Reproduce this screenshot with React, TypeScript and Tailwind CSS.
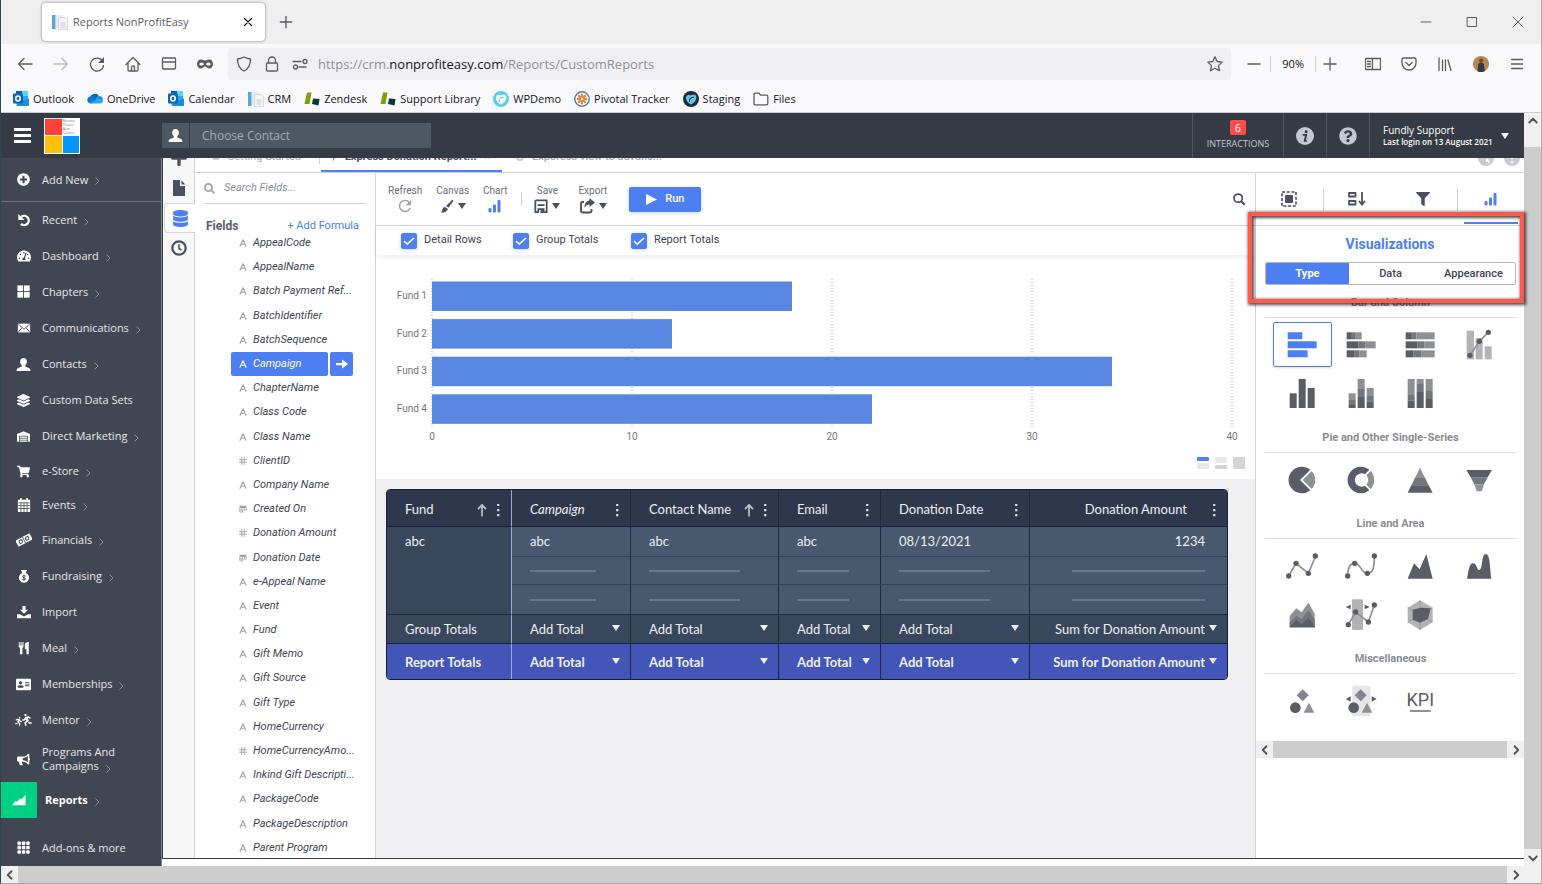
import { useState } from "react";
import type { ReactNode } from "react";
import {
  FaPlusCircle,
  FaTachometerAlt,
  FaLayerGroup,
  FaWarehouse,
  FaShoppingCart,
  FaAddressCard,
  FaBullhorn,
  FaFilter,
  FaDatabase,
  FaQuestionCircle,
  FaSearch,
  FaPlus,
  FaRunning,
} from "react-icons/fa";
import { IoMdRefresh } from "react-icons/io";

const DARK = "#5a5c66";
const MID = "#74767e";
const LIGHT = "#8e9093";
const PALE = "#b3b3b5";

/* ---------- small shared icons ---------- */

function Svg({ box = 16, className = "size-4", children }: { box?: number; className?: string; children: ReactNode }) {
  return (
    <svg viewBox={`0 0 ${box} ${box}`} className={`shrink-0 ${className}`} fill="none" stroke="none" aria-hidden="true">
      {children}
    </svg>
  );
}

function Line({ className = "size-4", d, width = 1.3 }: { className?: string; d: string; width?: number }) {
  return (
    <Svg className={className}>
      <path d={d} stroke="currentColor" strokeWidth={width} strokeLinecap="round" strokeLinejoin="round" />
    </Svg>
  );
}

function Caret({ className = "w-2" }: { className?: string }) {
  return (
    <svg viewBox="0 0 8 6" className={`shrink-0 ${className}`} fill="currentColor" aria-hidden="true">
      <path d="M0 0h8L4 6z" />
    </svg>
  );
}

function Person({ className = "size-4" }: { className?: string }) {
  return (
    <Svg className={className}>
      <path
        fill="currentColor"
        d="M8 1c2.200 0 3.600 1.600 3.600 3.900 0 1.800-.7 3.200-1.700 4v1.200c2.400 1 5 1.700 5.300 3.300.1.500.1 1 .1 1.600H.7c0-.6 0-1.100.1-1.600C1.100 11.800 3.700 11.100 6.100 10.100V8.900c-1-.8-1.700-2.200-1.700-4C4.400 2.600 5.800 1 8 1z"
      />
    </Svg>
  );
}

function SignalBars() {
  return (
    <Svg className="size-4">
      <g fill="currentColor">
        <rect x="1.500" y="10" width="3" height="4.500" rx="1" />
        <rect x="6" y="6.500" width="3" height="8" rx="1" />
        <rect x="10.500" y="2" width="3" height="12.500" rx="1" />
      </g>
    </Svg>
  );
}

function OutlookIcon() {
  return (
    <Svg>
      <rect x="3" y="0" width="12" height="13" rx="1" fill="#28a8ea" />
      <rect x="9" y="0" width="6" height="5" fill="#50d9ff" />
      <rect x="3" y="0" width="6" height="5" fill="#0a5fb4" />
      <path d="M16 7.500V14a1 1 0 0 1-1 1H4l-1-1 6-4z" fill="#1490df" />
      <rect x="0" y="2.500" width="10" height="10" rx="1" fill="#0f63b8" />
      <ellipse cx="5" cy="7.500" rx="2.200" ry="2.500" stroke="#fff" strokeWidth="1.500" />
    </Svg>
  );
}

function OneDriveIcon() {
  return (
    <Svg>
      <path d="M3 7a5 5 0 0 1 9-2l-6 5-4 1z" fill="#0364b8" />
      <path d="M3.600 12.500A3.600 3.600 0 0 1 3.200 5.400c1.500-.6 3-.2 4 .6l6 4z" fill="#0f78d4" />
      <path d="M8.500 7.500A4 4 0 0 1 12.500 5c2.200.3 3.500 2 3.500 4z" fill="#1490df" />
      <path d="M2.500 12.400 11 7.600l4.800 1.200c.6 1.900-.6 3.700-2.800 3.700H3.600z" fill="#28a8ea" />
    </Svg>
  );
}

function DocsIcon() {
  return (
    <Svg>
      <rect x="0" y="1" width="3.500" height="14" fill="#5aa7d6" />
      <path d="M4 1h7v13H4z" fill="#e6ecf1" />
      <path d="M6.500 3.500h6.500l2.500 2.500v9.500h-9z" fill="#f4f6f8" stroke="#c6ced5" strokeWidth=".7" />
      <path d="M8.500 9h5M8.500 11h5M8.500 13h5" stroke="#b9c2ca" strokeWidth=".8" />
    </Svg>
  );
}

function ZendeskIcon() {
  return (
    <Svg>
      <path d="M3 1.500h4.500L5.500 13H.5z" fill="#78a300" />
      <path d="m9 7.500 6.500.5-1 6.500-6.500-1.500z" fill="#03363d" />
    </Svg>
  );
}

function WaveRing({ ring, core }: { ring: string; core: string }) {
  return (
    <Svg>
      <circle cx="8" cy="8" r="8" fill={ring} />
      <path d="M3 6C4 2.500 8 4.500 8 4.500s4-2 5.200 1C14 9 10.500 12.500 8 13.500 5.500 12.500 2.500 9.500 3 6z" fill={core} />
      <path d="M6.500 10.500C6 8 8 6.300 10.500 6.300" stroke={ring} strokeWidth="1.100" strokeLinecap="round" />
    </Svg>
  );
}

function PivotalIcon() {
  return (
    <Svg>
      <circle cx="8" cy="8" r="7.200" fill="#fff" stroke="#4d80a8" strokeWidth="1.400" />
      <path d="M8 2.800v10.400M2.800 8h10.400M4.300 4.300l7.400 7.400M11.700 4.300l-7.400 7.400" stroke="#ee7b30" strokeWidth="2" />
      <circle cx="8" cy="8" r="1.200" fill="#fff" />
    </Svg>
  );
}

/* ---------- browser chrome ---------- */

const bookmarks: { label: string; icon: ReactNode }[] = [
  { label: "Outlook", icon: <OutlookIcon /> },
  { label: "OneDrive", icon: <OneDriveIcon /> },
  { label: "Calendar", icon: <OutlookIcon /> },
  { label: "CRM", icon: <DocsIcon /> },
  { label: "Zendesk", icon: <ZendeskIcon /> },
  { label: "Support Library", icon: <ZendeskIcon /> },
  { label: "WPDemo", icon: <WaveRing ring="#59cdee" core="#fff" /> },
  { label: "Pivotal Tracker", icon: <PivotalIcon /> },
  { label: "Staging", icon: <WaveRing ring="#25283d" core="#59cdee" /> },
  { label: "Files", icon: <Line className="size-4 text-[#5b5b66]" d="M1 12.500v-9c0-.8.5-1.300 1.300-1.300H6l1.500 2h6c.8 0 1.300.5 1.300 1.300v7c0 .8-.5 1.300-1.300 1.300H2.300c-.8 0-1.300-.5-1.300-1.300z" /> },
];

function BrowserChrome() {
  return (
    <header className="shrink-0 font-['Open_Sans',sans-serif]">
      <div className="flex h-11 items-center bg-[#efefef] pl-[41px]">
        <div className="flex h-[38px] w-[223px] items-center rounded bg-white px-2.5 shadow-[0_0_3px_rgba(0,0,0,0.5)]">
          <DocsIcon />
          <span className="ml-[5px] flex-1 text-[11px] text-[#5b5b66]">Reports NonProfitEasy</span>
          <button aria-label="Close tab"><Line className="size-3.5 text-[#15141a]" d="M4 4l8 8M12 4l-8 8" /></button>
        </div>
        <button aria-label="New tab" className="ml-3"><Line className="size-[18px] text-[#5b5b66]" d="M8 3v10M3 8h10" width={1.2} /></button>
        <div className="ml-auto flex gap-[30px] pr-[15px] text-[#5b5b66]">
          <button aria-label="Minimize"><Line d="M3 8h10" width={1} /></button>
          <button aria-label="Maximize"><Line d="M3.500 3.500h9v9h-9z" width={1} /></button>
          <button aria-label="Close window"><Line d="M3 3l10 10M13 3L3 13" width={1} /></button>
        </div>
      </div>
      <div className="flex h-10 items-center bg-[#f9f9fb] text-[#5b5b66]">
        <div className="flex items-center gap-5 pl-4">
          <button aria-label="Back"><Line d="M15 8H1.500M7 2.500 1.500 8 7 13.500" /></button>
          <button aria-label="Forward" className="text-[#bcbcc2]"><Line d="M1 8h13.500M9 2.500 14.500 8 9 13.500" /></button>
          <button aria-label="Reload">
            <Svg><path d="M13.700 5.500A6.500 6.500 0 1 0 14.500 9" stroke="currentColor" strokeWidth="1.300" /><path d="M15 1v6H9z" fill="currentColor" /></Svg>
          </button>
          <button aria-label="Home"><Line d="M1 8.500 8 1.500l7 7M3 7v7c0 .6.300 1 1 1h8c.7 0 1-.4 1-1V7M6.500 15v-3.500c0-2 3-2 3 0V15" /></button>
          <button aria-label="Windows"><Line d="M2.500 2h11c.6 0 1 .4 1 1v9c0 .6-.4 1-1 1h-11c-.6 0-1-.4-1-1V3c0-.6.4-1 1-1zM2 6h12" /></button>
          <button aria-label="Private browsing">
            <Svg><path fillRule="evenodd" fill="currentColor" d="M4 3.500c2 0 2.500 1 4 1s2-1 4-1c2.600 0 4 1.800 4 4.500s-1.500 4.500-3.800 4.500C10 12.500 9.500 10.500 8 10.500s-2 2-4.200 2C1.500 12.500 0 10.700 0 8s1.400-4.500 4-4.500zM4.500 6.500C3 6.500 2.300 7.700 2.300 8.200c0 .5 1 1.300 2.200 1.300S6.800 8.700 6.800 8.200c0-.6-.8-1.700-2.300-1.700zm7 0c-1.500 0-2.300 1.100-2.300 1.700 0 .5 1 1.300 2.300 1.300s2.200-.8 2.200-1.300c0-.5-.7-1.700-2.200-1.700z" /></Svg>
          </button>
        </div>
        <div className="ml-[15px] flex h-8 flex-1 items-center gap-3 rounded bg-[#f0f0f4] px-2">
          <Line d="M8 1c2.500 1.200 4.500 1.800 6.500 2 0 6-2 10-6.500 12C3.500 13 1.500 9 1.500 3 3.500 2.800 5.500 2.200 8 1z" />
          <Line d="M3.500 7h9c.6 0 1 .4 1 1v6c0 .6-.4 1-1 1h-9c-.6 0-1-.4-1-1V8c0-.6.4-1 1-1zM4.500 7V4.500a3.500 3.500 0 0 1 7 0V7" />
          <Line d="M1 5.500h8M11 5.500a2 2 0 1 0 4 0 2 2 0 1 0-4 0M7 11h7M1.500 11a2 2 0 1 0 4 0 2 2 0 1 0-4 0" />
          <a href="#" className="-ml-0.5 flex-1 pt-0.5 text-[13px] text-[#8f8f9d]">
            https://crm.<span className="text-[#15141a]">nonprofiteasy.com</span>/Reports/CustomReports
          </a>
          <button aria-label="Bookmark this page"><Line d="M8 .8l2.200 4.700 5 .6-3.700 3.500 1 5.100L8 12.200l-4.500 2.500 1-5.100L.8 6.100l5-.6z" /></button>
        </div>
        <div className="flex items-center pl-[15px]">
          <button aria-label="Zoom out"><Line d="M2 8h12" /></button>
          <span className="ml-2 border-x border-[#cfcfd8] px-[11px] text-[11px] text-[#15141a]">90%</span>
          <button aria-label="Zoom in" className="ml-1.5"><Line d="M8 2v12M2 8h12" /></button>
        </div>
        <div className="flex items-center gap-5 pr-4 pl-[27px]">
          <button aria-label="Sidebar"><Line d="M1 2.500h14c.3 0 .5.200.5.500v10c0 .3-.2.500-.5.500H1c-.3 0-.5-.2-.5-.5V3c0-.3.200-.5.500-.5zM7.500 3v10M2.500 5.500h3M2.500 8h3M2.500 10.500h3" /></button>
          <button aria-label="Pocket"><Line d="M2.500 2h11c.9 0 1.500.6 1.500 1.500V7a7 7 0 0 1-14 0V3.500C1 2.600 1.600 2 2.500 2zM4.800 6.500 8 9.500l3.200-3" /></button>
          <button aria-label="Library"><Line d="M2 2v12.500M5.500 4v10.500M8.500 4v10.500M11 4l3 10.500" /></button>
          <button aria-label="Account">
            <Svg><circle cx="8" cy="8" r="8" fill="#b9834d" /><circle cx="8" cy="4.500" r="1.900" fill="#6b4630" /><path d="M4.500 15.200 5.200 8c1-1.600 4.600-1.600 5.600 0l1 7a8 8 0 0 1-7.300.2z" fill="#2c3a4c" /></Svg>
          </button>
          <button aria-label="Menu"><Line d="M2.500 3.500h11M2.500 8h11M2.500 12.500h11" /></button>
        </div>
      </div>
      <nav className="flex h-[29px] items-center gap-[13px] border-b border-[#cccccc] bg-[#f9f9fb] pt-1.5 pb-1 pl-3 text-[11px] text-[#15141a]">
        {bookmarks.map((b) => (
          <a key={b.label} href="#" className="flex items-center gap-1">
            {b.icon}
            {b.label}
          </a>
        ))}
      </nav>
    </header>
  );
}

/* ---------- app header ---------- */

function AppHeader() {
  return (
    <div className="flex h-[45px] shrink-0 items-center bg-[#353b45] font-['Open_Sans',sans-serif] text-[#c3c8d2]">
      <button aria-label="Toggle menu" className="ml-[13px] flex w-[17px] flex-col gap-[3px]">
        <span className="h-[3px] bg-white" />
        <span className="h-[3px] bg-white" />
        <span className="h-[3px] bg-white" />
      </button>
      <div className="ml-[13px] grid size-9 grid-cols-2 grid-rows-2 gap-px bg-white p-px">
        <span className="bg-[#ff4136]" />
        <span className="min-h-0 text-[4px] leading-[4px] text-[#777]">Monty Draco Arts Center</span>
        <span className="bg-[#ffc107]" />
        <span className="bg-[#0096ff]" />
      </div>
      <div className="ml-[82px] flex h-[25px]">
        <span className="flex w-[27px] items-center justify-center bg-[#4e5863] text-white"><Person className="size-[15px]" /></span>
        <input
          aria-label="Choose Contact"
          placeholder="Choose Contact"
          className="ml-px w-[241px] bg-[#4e5863] px-3 text-[12px] outline-none placeholder:text-[#a3abb4]"
        />
      </div>
      <div className="ml-auto flex h-full text-white">
        <button className="flex w-[91px] flex-col items-center border-l border-[#4e5863] pt-[7px]">
          <span className="h-[15px] w-4 rounded-xs bg-[#ff4b4b] text-[11px] leading-[15px]">6</span>
          <span className="mt-px text-[9px] leading-4 text-[#c3c8d2]">INTERACTIONS</span>
        </button>
        <button aria-label="Info" className="flex w-[43px] items-center justify-center border-l border-[#4e5863] text-[#c3c8d2]">
          <Svg className="size-[18px]">
            <circle cx="8" cy="8" r="8" fill="currentColor" />
            <circle cx="9" cy="4.200" r="1.300" fill="#353b45" />
            <path d="M6 7h3l-1.200 5.300h1.700" stroke="#353b45" strokeWidth="1.700" />
          </Svg>
        </button>
        <button aria-label="Help" className="flex w-[43px] items-center justify-center border-l border-[#4e5863] text-[#c3c8d2]"><FaQuestionCircle size={18} /></button>
        <button className="flex w-[155px] items-center border-l border-[#4e5863] pl-[13px] text-left">
          <span className="flex-1">
            <span className="block text-[10px] leading-3">Fundly Support</span>
            <span className="block text-[8px] leading-3 font-semibold">Last login on 13 August 2021</span>
          </span>
          <Caret className="mr-[15px] w-2" />
        </button>
      </div>
    </div>
  );
}

/* ---------- left navigation ---------- */

function Squares({ n }: { n: number }) {
  const cells = Array.from({ length: n * n }, (_, i) => i);
  const step = 15 / n;
  return (
    <Svg className="size-3.5">
      {cells.map((i) => (
        <rect key={i} x={(i % n) * step + 0.5} y={Math.floor(i / n) * step + 0.5} width={step - 1} height={step - 1} rx={n === 3 ? 1 : 0} fill="currentColor" />
      ))}
    </Svg>
  );
}

const navItems: { label: string; icon: ReactNode; arrow?: boolean; short?: boolean }[] = [
  {
    label: "Recent",
    arrow: true,
    icon: <Svg className="size-3.5"><path d="M5 4.300A5.300 5.300 0 1 1 4.500 12.500" stroke="#fff" strokeWidth="2.600" /><path d="M1.500 1v7h7z" fill="#fff" /></Svg>,
  },
  { label: "Dashboard", icon: <FaTachometerAlt size={14} />, arrow: true },
  { label: "Chapters", icon: <Squares n={2} />, arrow: true },
  {
    label: "Communications",
    arrow: true,
    icon: <Svg className="size-3.5"><path d="M1 3h14v10H1z" fill="#fff" /><path d="M1.500 3.500 8 9.500l6.500-6M1.500 12.500l4-4.500M14.500 12.500l-4-4.500" stroke="#414752" /></Svg>,
  },
  { label: "Contacts", icon: <Person className="size-[15px]" />, arrow: true },
  { label: "Custom Data Sets", icon: <FaLayerGroup size={13} /> },
  { label: "Direct Marketing", icon: <FaWarehouse size={13} />, arrow: true },
  { label: "e-Store", icon: <FaShoppingCart size={13} />, arrow: true, short: true },
  {
    label: "Events",
    arrow: true,
    short: true,
    icon: <Svg className="size-3.5"><path d="M1 2h14v14H1z" fill="#fff" /><path d="M1.500 5.500h13M1.500 8.700h13M1.500 12h13M4.500 5.500V16M8 5.500V16M11.500 5.500V16" stroke="#414752" strokeWidth=".9" /><path d="M4.500 0v4M11.500 0v4" stroke="#fff" strokeWidth="1.800" /></Svg>,
  },
  {
    label: "Financials",
    arrow: true,
    icon: <Svg className="size-4"><g transform="rotate(-28 8 8)"><path d="M0 4.500h16v7H0z" fill="#fff" /><circle cx="4.500" cy="8" r="1.700" stroke="#414752" /><circle cx="11.500" cy="8" r="1.700" stroke="#414752" /><path d="M8 4.500v7" stroke="#414752" strokeWidth=".8" /></g></Svg>,
  },
  {
    label: "Fundraising",
    arrow: true,
    icon: <Svg className="size-3.5"><path d="M4.500 1h7L10 4.500a5.800 5.800 0 1 1-4 0z" fill="#fff" /><path d="M10 8.300C9 7.300 6.200 7.300 6.200 8.700c0 1.500 3.800.9 3.800 2.500 0 1.500-3 1.400-4 .4M8 6.700v6.600" stroke="#414752" strokeWidth="1.100" /></Svg>,
  },
  {
    label: "Import",
    icon: <Svg className="size-3.5"><path d="M6.300 1h3.400v4.500h3L8 10 3.300 5.500h3zM0 10.500h3.500L8 13l4.500-2.500H16V15H0z" fill="#fff" /></Svg>,
  },
  {
    label: "Meal",
    arrow: true,
    icon: <Svg className="size-3.5"><path d="M2 1h1v4h1V1h1.200v4h1V1h1.200v5.500L6.200 8v7H3.400V8L2 6.500zM9 4c0-2 1.500-3 4.500-3v14h-2.700V9.500H9z" fill="#fff" /></Svg>,
  },
  { label: "Memberships", icon: <FaAddressCard size={15} />, arrow: true },
  { label: "Mentor", icon: <span className="flex items-end"><FaRunning size={9} className="-mr-0.5" /><FaRunning size={12} className="-scale-x-100" /></span>, arrow: true },
];

function Chevron() {
  return (
    <svg viewBox="0 0 5 8" className="mt-[3px] ml-[7px] inline-block h-2 w-[5px] shrink-0" fill="none" stroke="#8b9099" aria-hidden="true">
      <path d="M.5.500 4 4 .5 7.500" />
    </svg>
  );
}

function NavItem({ icon, arrow, className, children }: { icon: ReactNode; arrow?: boolean; className: string; children: ReactNode }) {
  return (
    <a href="#" className={`flex items-center ${className}`}>
      <span className="ml-3 flex w-[21px] justify-center text-white">{icon}</span>
      <span className="ml-2">{children}</span>
      {arrow && <Chevron />}
    </a>
  );
}

function SideNav() {
  return (
    <nav className="w-[161px] shrink-0 border-r border-[#7f858f] bg-[#414752] font-['Open_Sans',sans-serif] text-[11px] leading-[14px] text-[#e6e8eb]">
      <NavItem icon={<FaPlusCircle size={13} />} arrow className="h-11 border-b border-[#6b7683]">
        Add New
      </NavItem>
      {navItems.map((item) => (
        <NavItem key={item.label} icon={item.icon} arrow={item.arrow} className={item.short ? "h-[34px]" : "h-9"}>
          {item.label}
        </NavItem>
      ))}
      <NavItem icon={<FaBullhorn size={13} />} className="h-[42px]">
        Programs And
        <br />
        Campaigns
        <Chevron />
      </NavItem>
      <a href="#" className="mt-0.5 flex h-9 items-center font-bold text-white">
        <span className="flex size-9 items-center justify-center bg-[#00d084]">
          <Svg className="size-3.5"><path d="M0 14 4 9l2 1 3-4 2 1 4.500-5v12z" fill="#fff" /></Svg>
        </span>
        <span className="ml-2">Reports</span>
        <Chevron />
      </a>
      <NavItem icon={<Squares n={3} />} className="mt-3 h-9">
        Add-ons &amp; more
      </NavItem>
    </nav>
  );
}

/* ---------- report designer ---------- */

function DesignerTabs() {
  return (
    <div className="flex h-[15px] shrink-0 items-end overflow-hidden border-b border-[#d2d3d6] text-[11px] leading-4 text-[#a9abb3]">
      <a href="#" className="flex w-[124px] items-center justify-center pb-[7px]">
        <span className="mr-2 size-1.5 bg-[#c9cbd1]" />
        Getting Started
      </a>
      <span className="mb-2 h-4 w-px bg-[#d2d3d6]" />
      <a href="#" className="ml-px flex w-[181px] items-center justify-center border-b-2 border-[#4d7ef2] pb-[5px] font-bold text-[#4a4f61]">
        <span className="mr-2 text-[#4d7ef2]">/</span>
        Express Donation Report...
        <span className="ml-2 text-[#c9cbd1]">×</span>
      </a>
      <a href="#" className="ml-3.5 flex items-center pb-[7px] font-medium">
        <span className="mr-2 size-2 rounded-full border-2 border-[#c9cbd1]" />
        Exporess view to advanc...
      </a>
      <span className="ml-auto flex gap-2.5 pr-1 pb-[6px] text-[#c9cbd1]">
        <Svg><circle cx="8" cy="8" r="8" fill="currentColor" /><path d="M8 8v4.500l1.500-1.200 1.500 2 1-1-1.500-2H12z" fill="#fff" /></Svg>
        <Svg><circle cx="8" cy="8" r="8" fill="currentColor" /><path d="M8 4v5M8 11v2" stroke="#fff" strokeWidth="2" /></Svg>
      </span>
    </div>
  );
}

function Rail() {
  return (
    <div className="flex w-8 shrink-0 flex-col border-r border-[#d2d3d6] bg-[#f7f7f7] pl-px text-[#4a4f61]">
      <button aria-label="Add" className="flex h-3.5 items-end justify-center overflow-hidden pb-[5px]"><FaPlus size={18} className="shrink-0" /></button>
      <button aria-label="Report" className="flex h-[31px] items-center justify-center">
        <Svg><path d="M2 0h7v6h5v10H2z" fill="currentColor" /><path d="M10.500 0 14 4.500h-3.500z" fill="currentColor" /></Svg>
      </button>
      <button aria-label="Data" className="-mr-px flex h-[30px] items-center justify-center rounded-l border border-r-0 border-[#d2d3d6] bg-white text-[#4d7ef2]"><FaDatabase size={17} /></button>
      <button aria-label="History" className="flex h-[30px] items-center justify-center">
        <Svg><circle cx="8" cy="8" r="6.700" stroke="currentColor" strokeWidth="2.200" /><path d="M8 4v4.500l2.500 1.500" stroke="currentColor" strokeWidth="1.500" /></Svg>
      </button>
    </div>
  );
}

type FieldType = "text" | "number" | "date";

const fields: [string, FieldType][] = [
  ["AppealCode", "text"],
  ["AppealName", "text"],
  ["Batch Payment Ref...", "text"],
  ["BatchIdentifier", "text"],
  ["BatchSequence", "text"],
  ["Campaign", "text"],
  ["ChapterName", "text"],
  ["Class Code", "text"],
  ["Class Name", "text"],
  ["ClientID", "number"],
  ["Company Name", "text"],
  ["Created On", "date"],
  ["Donation Amount", "number"],
  ["Donation Date", "date"],
  ["e-Appeal Name", "text"],
  ["Event", "text"],
  ["Fund", "text"],
  ["Gift Memo", "text"],
  ["Gift Source", "text"],
  ["Gift Type", "text"],
  ["HomeCurrency", "text"],
  ["HomeCurrencyAmo...", "number"],
  ["Inkind Gift Descripti...", "text"],
  ["PackageCode", "text"],
  ["PackageDescription", "text"],
  ["Parent Program", "text"],
];

function FieldIcon({ type }: { type: FieldType }) {
  if (type === "number") return <Line className="size-2" d="M5.500 1v14M10.500 1v14M1 5.500h14M1 10.500h14" width={1.8} />;
  if (type === "date")
    return (
      <Svg className="size-2"><path d="M1 1.500h14V6H1z" fill="currentColor" /><path d="M1.500 6v8h7M14.500 6v4M1 10h14M6 6v8M10.500 6v4" stroke="currentColor" strokeWidth="1.600" /></Svg>
    );
  return <Line className="size-2" d="M2 14.500 8 1.500l6 13M4 10.500h8" width={2.2} />;
}

function FieldsPanel() {
  const [selected, setSelected] = useState("Campaign");
  return (
    <aside className="flex w-[181px] shrink-0 flex-col border-r border-[#d2d3d6] bg-white">
      <label className="mx-[9px] flex h-[31px] items-center gap-[9px] border-b border-[#d2d3d6] text-[#a0a3ab]">
        <FaSearch size={11} className="shrink-0" />
        <input aria-label="Search fields" placeholder="Search Fields..." className="w-full min-w-0 pt-px text-[11px] italic outline-none placeholder:text-[#8b8e98]" />
      </label>
      <div className="flex items-center justify-between pt-3.5 pr-4 pl-[11px] text-[11px] leading-4">
        <h2 className="text-xs leading-4 font-bold text-[#5a5d69]">Fields</h2>
        <button className="text-[#4d7ef2]">+ Add Formula</button>
      </div>
      <ul className="-mt-[3px] -mb-0.5 flex flex-1 flex-col text-[11px] leading-4 text-[#3f4454] italic">
        {fields.map(([name, type]) => {
          const on = name === selected;
          return (
            <li key={name} className="flex flex-1 items-center pl-9">
              <button
                onClick={() => setSelected(name)}
                className={`flex h-6 items-center pl-2 text-left whitespace-nowrap italic ${on ? "w-[97px] rounded-xs bg-[#4d7ef2] text-white" : "w-[140px]"}`}
              >
                <span className={`mr-1.5 ${on ? "text-white" : "text-[#a0a3ab]"}`}><FieldIcon type={type} /></span>
                {name}
              </button>
              {on && (
                <button aria-label={`Add ${name}`} className="ml-0.5 flex h-6 w-[23px] items-center justify-center rounded-xs bg-[#4d7ef2] text-white">
                  <Svg className="size-3"><path d="M0 6.500h8V2l8 6-8 6V9.500H0z" fill="#fff" /></Svg>
                </button>
              )}
            </li>
          );
        })}
      </ul>
    </aside>
  );
}

function ToolButton({ label, className, children }: { label: string; className: string; children: ReactNode }) {
  return (
    <button className={`flex flex-col items-center pt-0.5 text-[10px] leading-3 text-[#6b6e79] ${className}`}>
      {label}
      <span className="flex h-[18px] items-center gap-1 text-[#4a4f61]">{children}</span>
    </button>
  );
}

function Toolbar() {
  return (
    <div className="flex h-[53px] shrink-0 items-center border-b border-[#d2d3d6] bg-white">
      <ToolButton label="Refresh" className="ml-3"><IoMdRefresh size={18} className="text-[#a0a3ab]" /></ToolButton>
      <ToolButton label="Canvas" className="ml-3.5">
        <Svg className="size-3.5"><path d="M14 .8c1 0 1.500.8 1 1.800L9.800 10 7 8z" fill="currentColor" /><path d="M6 9l3 2.300C8.500 14 5 15.500 1 15.500c1.500-1 1.300-2.300 1.800-4C3.300 10 4.500 9 6 9z" fill="currentColor" /></Svg>
        <Caret />
      </ToolButton>
      <ToolButton label="Chart" className="ml-3.5"><span className="text-[#4d7ef2]"><SignalBars /></span></ToolButton>
      <span className="mr-3 ml-3.5 h-3.5 w-px bg-[#d2d3d6]" />
      <ToolButton label="Save" className="">
        <Svg className="size-3.5"><path d="M1.500 15V2.500L2.500 1.500h12V15h-3.500v-3.500H5V15z" stroke="currentColor" strokeWidth="2" /><path d="M4 7h8M8.500 13h1.500v3H8.500z" stroke="currentColor" strokeWidth="2" /></Svg>
        <Caret />
      </ToolButton>
      <ToolButton label="Export" className="ml-[18px]">
        <Svg className="size-4"><path d="M5 4H3.500c-1 0-1.500.5-1.500 1.500V13c0 1 .5 1.500 1.500 1.500H11c1 0 1.500-.5 1.500-1.500v-2" stroke="currentColor" strokeWidth="1.900" /><path d="M10.500 0v2.500C7 3 5.500 6 5.500 9.500 7 7.500 8.500 6.500 10.500 6.500V9L16 4.500z" fill="currentColor" /></Svg>
        <Caret />
      </ToolButton>
      <button className="ml-[22px] flex h-[25px] w-[72px] items-center justify-center gap-2 rounded-xs bg-[#4d7ef2] text-[11px] font-medium text-white shadow-[0_1px_4px_rgba(77,126,242,0.3)]">
        <svg viewBox="0 0 11 11" className="size-[11px]" fill="currentColor" aria-hidden="true"><path d="M0 0l11 5.500L0 11z" /></svg>
        Run
      </button>
      <button aria-label="Search" className="mr-[9px] ml-auto text-[#4a4f61]">
        <Svg className="size-3.5"><circle cx="7" cy="7" r="4.700" stroke="currentColor" strokeWidth="2" /><path d="m10.500 10.500 4 4" stroke="currentColor" strokeWidth="2.500" /></Svg>
      </button>
    </div>
  );
}

function CheckOption({ label, className }: { label: string; className: string }) {
  return (
    <label className={`flex items-center text-[11px] text-[#3f4454] ${className}`}>
      <span className="relative flex size-4">
        <input type="checkbox" defaultChecked className="peer size-4 appearance-none rounded-xs border border-[#4d7ef2] shadow-[0_1px_4px_rgba(77,126,242,0.3)] checked:bg-[#4d7ef2]" />
        <svg viewBox="0 0 16 16" className="pointer-events-none absolute inset-0 hidden peer-checked:block" fill="none" stroke="#fff" strokeWidth="1.700" aria-hidden="true">
          <path d="m3 8.200 3.300 3L13 5" />
        </svg>
      </span>
      <span className="ml-[7px]">{label}</span>
    </label>
  );
}

const funds = [
  { name: "Fund 1", value: 18 },
  { name: "Fund 2", value: 12 },
  { name: "Fund 3", value: 34 },
  { name: "Fund 4", value: 22 },
];

function FundChart() {
  return (
    <div className="bg-white pt-[23px] pr-[23px] pb-2.5 pl-14">
      <svg className="h-[165px] w-full overflow-visible text-[10px]" role="img" aria-label="Donations by fund">
        {[0, 10, 20, 30, 40].map((v) => (
          <g key={v}>
            <line x1={`${v * 2.5}%`} x2={`${v * 2.5}%`} y1="1" y2="149" stroke="#a5a5a5" strokeDasharray="1 2" />
            <text x={`${v * 2.5}%`} y="162" textAnchor="middle" fill="#757575">{v}</text>
          </g>
        ))}
        {funds.map((f, i) => (
          <g key={f.name}>
            <text x="-5" y={21 + i * 37.6} textAnchor="end" fill="#757575">{f.name}</text>
            <rect x="0" y={3.5 + i * 37.6} width={`${f.value * 2.5}%`} height="29.500" fill="#5887e1" />
          </g>
        ))}
      </svg>
      <div className="mt-3.5 -mr-[13px] flex justify-end gap-1.5">
        <button aria-label="Chart above" className="flex w-3 flex-col gap-0.5"><span className="h-1 rounded-[1px] bg-[#4d7ef2]" /><span className="h-[6px] rounded-[1px] bg-[#e8e8e8]" /></button>
        <button aria-label="Chart below" className="flex w-3 flex-col gap-0.5"><span className="h-[6px] rounded-[1px] bg-[#e8e8e8]" /><span className="h-1 rounded-[1px] bg-[#d4d4d4]" /></button>
        <button aria-label="Chart only" className="size-3 rounded-[1px] bg-[#d4d4d4]" />
      </div>
    </div>
  );
}

type Column = { name: string; sample: string; sorted?: boolean; total: string; width: string; bar: string };

const columns: Column[] = [
  { name: "Campaign", sample: "abc", total: "Add Total", width: "w-[119px]", bar: "w-[66px]" },
  { name: "Contact Name", sample: "abc", sorted: true, total: "Add Total", width: "w-[148px]", bar: "w-[91px]" },
  { name: "Email", sample: "abc", total: "Add Total", width: "w-[102px]", bar: "w-[52px]" },
  { name: "Donation Date", sample: "08/13/2021", total: "Add Total", width: "w-[149px]", bar: "w-[91px]" },
  { name: "Donation Amount", sample: "1234", total: "Sum for Donation Amount", width: "w-[197px]", bar: "ml-auto w-[133px]" },
];

function HeadCell({ name, sorted, right }: { name: string; sorted?: boolean; right?: boolean }) {
  return (
    <div className="flex items-center pt-[3px] pr-1.5 pl-[18px]">
      <span className={right ? "flex-1 text-right" : "flex-1"}>{name}</span>
      {sorted && <Line className="size-3.5 text-[#b9bdc5]" d="M8 14.500V2.500M4 6.500 8 2l4 4.500" width={2} />}
      <button aria-label={`${name} options`} className={right ? "ml-5" : "ml-0.5"}>
        <Svg className="size-3.5"><path d="M7 1h2.500v2.500H7zM7 6.800h2.500v2.500H7zM7 12.500h2.500V15H7z" fill="#dfe1e5" /></Svg>
      </button>
    </div>
  );
}

function TotalSelect({ total, label, right }: { total: string; label: string; right?: boolean }) {
  return (
    <div className="relative">
      <select
        aria-label={label}
        className={`w-full appearance-none pt-0.5 outline-none ${right ? "pr-[22px] [text-align-last:right]" : "pl-[18px]"}`}
      >
        <option>{total}</option>
      </select>
      <Caret className="pointer-events-none absolute top-1/2 right-2.5 -mt-1 w-2" />
    </div>
  );
}

function ReportTable() {
  const vline = "border-r border-[#1f2a3d]";
  const last = columns.length - 1;
  return (
    <div className="mt-2.5 ml-2.5 w-fit overflow-hidden rounded border border-[#15203a]">
      <table className="table-fixed border-separate border-spacing-0 bg-[#47586f] font-['Comic_Sans_MS',Lato,sans-serif] text-[13px] text-[#eef0f3]">
        <colgroup>
          <col className="w-[125px]" />
          {columns.map((c) => (
            <col key={c.name} className={c.width} />
          ))}
        </colgroup>
        <thead>
          <tr className="h-[37px] bg-[#2e384c] text-left">
            <th className="border-r border-b border-r-[#9fa9d8] border-b-[#15203a] p-0 font-normal"><HeadCell name="Fund" sorted /></th>
            {columns.map((c, i) => (
              <th key={c.name} className={`border-b border-b-[#15203a] p-0 font-normal ${i < last ? vline : ""} ${c.name === "Campaign" ? "italic" : ""}`}>
                <HeadCell name={c.name} sorted={c.sorted} right={i === last} />
              </th>
            ))}
          </tr>
        </thead>
        <tbody>
          <tr className="h-[30px]">
            <td rowSpan={3} className="border-r border-b border-r-[#9fa9d8] border-b-[#1f2a3d] bg-[#39475d] pt-[5px] pl-[18px] align-top">abc</td>
            {columns.map((c, i) => (
              <td key={c.name} className={`border-b border-b-[#354358] p-0 ${i === last ? "pr-[22px] text-right" : `pl-[18px] ${vline}`}`}>{c.sample}</td>
            ))}
          </tr>
          {[0, 1].map((row) => (
            <tr key={row} className={row ? "h-[30px]" : "h-7"}>
              {columns.map((c, i) => (
                <td key={c.name} className={`border-b p-0 ${row ? "border-b-[#1f2a3d]" : "border-b-[#354358]"} ${i === last ? "pr-[22px]" : `pl-[18px] ${vline}`}`}>
                  <span className={`block h-0.5 bg-[#69778d] ${c.bar}`} />
                </td>
              ))}
            </tr>
          ))}
        </tbody>
        <tfoot>
          {["Group Totals", "Report Totals"].map((name, row) => (
            <tr key={name} className={row ? "h-[35px] bg-[#4356b8] font-bold" : "h-[29px] bg-[#39475d]"}>
              <td className={`border-r border-r-[#9fa9d8] p-0 pt-0.5 pl-[18px] ${row ? "" : "border-b border-b-[#15203a]"}`}>{name}</td>
              {columns.map((c, i) => (
                <td key={c.name} className={`p-0 ${row ? "" : "border-b border-b-[#15203a]"} ${i < last ? vline : ""}`}>
                  <TotalSelect total={c.total} label={`${name}: ${c.name}`} right={i === last} />
                </td>
              ))}
            </tr>
          ))}
        </tfoot>
      </table>
    </div>
  );
}

/* ---------- visualizations panel (icons are drawn on a 96 unit grid) ---------- */

type Seg = [number, number, number, number, string];

function Blocks({ segs }: { segs: Seg[] }) {
  return (
    <>
      {segs.map(([x, y, w, h, fill], i) => (
        <rect key={i} x={x} y={y} width={w} height={h} fill={fill} />
      ))}
    </>
  );
}

function Dots({ points }: { points: [number, number][] }) {
  return (
    <>
      {points.map(([cx, cy]) => (
        <circle key={cx} cx={cx} cy={cy} r="8" fill={DARK} />
      ))}
    </>
  );
}

const barIcons: [string, ReactNode][] = [
  ["Bar", <g fill="#4d7ef2"><rect x="5" y="10" width="44" height="21" rx="1" /><rect x="5" y="37" width="87" height="21" rx="1" /><rect x="5" y="64" width="60" height="21" rx="1" /></g>],
  ["Stacked bar", <Blocks segs={[[5, 10, 13, 21, DARK], [18, 10, 12, 21, MID], [30, 10, 20, 21, LIGHT], [5, 37, 36, 21, DARK], [41, 37, 21, 21, MID], [62, 37, 30, 21, LIGHT], [5, 64, 24, 21, DARK], [29, 64, 15, 21, MID], [44, 64, 21, 21, LIGHT]]} />],
  ["Full bar", <Blocks segs={[[5, 10, 16, 21, DARK], [21, 10, 16, 21, MID], [37, 10, 55, 21, LIGHT], [5, 37, 36, 21, DARK], [41, 37, 21, 21, MID], [62, 37, 30, 21, LIGHT], [5, 64, 24, 21, DARK], [29, 64, 24, 21, MID], [53, 64, 39, 21, LIGHT]]} />],
  ["Combo", <><Blocks segs={[[11, 5, 22, 86, PALE], [38, 27, 21, 64, PALE], [65, 52, 21, 39, PALE]]} /><path d="M21 79 49 37 76 10" stroke={LIGHT} strokeWidth="5" /><Dots points={[[21, 79], [49, 37], [76, 10]]} /></>],
  ["Column", <Blocks segs={[[11, 46, 21, 44, DARK], [38, 3, 21, 87, DARK], [65, 30, 21, 60, DARK]]} />],
  ["Stacked column", <Blocks segs={[[11, 46, 21, 20, LIGHT], [11, 66, 21, 15, MID], [11, 81, 21, 9, DARK], [38, 3, 21, 30, LIGHT], [38, 33, 21, 24, MID], [38, 57, 21, 33, DARK], [65, 30, 21, 24, LIGHT], [65, 54, 21, 16, MID], [65, 70, 21, 20, DARK]]} />],
  ["Full column", <Blocks segs={[[11, 3, 21, 48, LIGHT], [11, 51, 21, 17, MID], [11, 68, 21, 22, DARK], [38, 3, 21, 15, LIGHT], [38, 18, 21, 24, MID], [38, 42, 21, 48, DARK], [65, 3, 21, 36, LIGHT], [65, 39, 21, 24, MID], [65, 63, 21, 27, DARK]]} />],
];

const pieIcons: [string, ReactNode][] = [
  ["Pie", <><path d="M42 48 73 17A40 40 0 1 0 73 79z" fill={DARK} /><path d="M50 48 77 21A40 40 0 0 1 77 75z" fill={LIGHT} /></>],
  ["Donut", <><path d="M73 17 60 31A20 20 0 1 0 60 65L73 79A40 40 0 1 1 73 17z" fill={DARK} /><path d="M77 21 64 34A20 20 0 0 1 64 62L77 75A40 40 0 0 0 77 21z" fill={LIGHT} /></>],
  ["Pyramid", <><path d="M48 11 34 40h28z" fill={LIGHT} /><path d="M34 40h28l12 24H22z" fill={MID} /><path d="M22 64h52l12 22H11z" fill={DARK} /></>],
  ["Funnel", <><path d="M10 18h77L74 40H23z" fill={DARK} /><path d="M23 40h51L63 61H34z" fill={MID} /><path d="M34 61h29l-7 21H41z" fill={LIGHT} /></>],
];

const lineIcons: [string, ReactNode][] = [
  ["Line", <><path d="M8 78 30 40 67 70 89 18" stroke={LIGHT} strokeWidth="5" /><Dots points={[[8, 78], [30, 40], [67, 70], [88, 18]]} /></>],
  ["Spline", <><path d="M8 78C8 50 18 40 29 40c19 0 19 30 38 30 18 0 21-20 21-52" stroke={LIGHT} strokeWidth="5" /><Dots points={[[8, 78], [29, 40], [67, 70], [88, 18]]} /></>],
  ["Area", <path d="M11 86 30 40 47 58 67 12 86 86z" fill={DARK} />],
  ["Spline area", <path d="M12 86C18 60 18 40 30 40s10 20 19 20c10 0 6-48 19-48 14 0 12 38 17 74z" fill={DARK} />],
  ["Stacked area", <><path d="M11 85V51L31 28 47 40 67 11 86 44V85z" fill={LIGHT} /><path d="M11 85V70L31 50 47 60 67 34 86 62V85z" fill={MID} /><path d="M11 85 31 62 47 76 67 56 86 82V85z" fill={DARK} /></>],
  ["Line timeline", <><rect x="21" y="1" width="33" height="92" rx="3" fill={PALE} /><path d="M10 77 32 39 70 69 88 18" stroke={LIGHT} strokeWidth="5" /><Dots points={[[10, 77], [32, 39], [70, 69], [88, 18]]} /><path d="M2 24 17 17V31zM59 17 74 24 59 31z" fill={DARK} /></>],
  ["Radar", <><path d="M48 4 86 26V70L48 93 11 70V26z" fill={PALE} /><path d="M48 4V93M11 26 86 70M86 26 11 70" stroke={LIGHT} strokeWidth="2" /><path d="M26 32 50 26 80 28 72 60 48 71 26 62z" fill={DARK} /></>],
];

const miscIcons: [string, ReactNode][] = [
  ["Bubble", <><path d="M50 13 68 31 50 49 32 31z" fill="#83858e" /><circle cx="28" cy="68" r="16" fill={DARK} /><path d="M69 53 85 83H53z" fill={LIGHT} /></>],
  ["Bubble timeline", <><rect x="22" y="2" width="54" height="92" rx="3" fill="#e6e6e6" /><path d="M47 13 65 31 47 49 29 31z" fill="#83858e" /><circle cx="26" cy="68" r="16" fill={DARK} /><path d="M66 53 82 83H50z" fill={LIGHT} /><path d="M2 42 17 34V50zM80 34 95 42 80 50z" fill={DARK} /></>],
  ["KPI", <><text x="49" y="64" textAnchor="middle" fontSize="54" fill={DARK}>KPI</text><path d="M20 78h58" stroke={LIGHT} strokeWidth="6" strokeLinecap="round" /></>],
];

const groups: { title: string; icons: [string, ReactNode][] }[] = [
  { title: "Bar and Column", icons: barIcons },
  { title: "Pie and Other Single-Series", icons: pieIcons },
  { title: "Line and Area", icons: lineIcons },
  { title: "Miscellaneous", icons: miscIcons },
];

function VisualizationsPanel() {
  const [tab, setTab] = useState("Type");
  const cell = "flex flex-1 items-center justify-center";
  return (
    <aside className="relative w-[269px] shrink-0 border-l border-[#d2d3d6] bg-white text-[#4a4f61]">
      <div className="relative flex h-[53px] items-center border-b border-[#d2d3d6]">
        <button aria-label="Layout" className={cell}>
          <Svg><rect x="1" y="1" width="14" height="14" stroke="currentColor" strokeWidth="1.600" strokeDasharray="3 1.700" /><rect x="4" y="4" width="8" height="8" rx="1" fill="currentColor" /></Svg>
        </button>
        <span className="h-6 w-px bg-[#d2d3d6]" />
        <button aria-label="Sorts" className={cell}>
          <Svg box={18} className="size-[18px]"><path d="M1 3h6.500v3.500H1zM1 11h6.500v3.500H1z" stroke="currentColor" strokeWidth="1.800" strokeLinejoin="round" /><path d="M14 2v12M11 11l3 3.500 3-3.500" stroke="currentColor" strokeWidth="1.800" /></Svg>
        </button>
        <button aria-label="Filters" className={cell}><FaFilter size={14} /></button>
        <span className="h-6 w-px bg-[#d2d3d6]" />
        <button aria-label="Visualizations" className={`${cell} text-[#4d7ef2]`}><SignalBars /></button>
        <span className="absolute right-[6px] bottom-px h-0.5 w-[54px] bg-[#4d7ef2]" />
      </div>
      <h2 className="pt-2 text-center text-sm leading-5 font-bold text-[#4d7ef2]">Visualizations</h2>
      <div className="mt-2 mr-2 ml-[9px] flex h-[23px] overflow-hidden rounded-xs border border-[#b4b7bf] text-[11px] font-medium">
        {["Type", "Data", "Appearance"].map((t) => (
          <button key={t} onClick={() => setTab(t)} className={`flex-1 pt-px ${tab === t ? "bg-[#4d7ef2] font-bold text-white" : "text-[#3f4454]"}`}>
            {t}
          </button>
        ))}
      </div>
      <div className="mt-0.5 mr-2 ml-[9px]">
        {groups.map((g) => (
          <section key={g.title}>
            <h3 className="flex h-[31px] items-center justify-center border-b border-[#dcdcde] pt-0.5 text-[11px] font-bold text-[#8a8c92]">{g.title}</h3>
            <div className="grid grid-cols-4 gap-y-1 pt-1 pr-2 pb-1.5 pl-2">
              {g.icons.map(([name, art]) => (
                <button
                  key={name}
                  aria-label={name}
                  className={`flex h-[45px] items-center justify-center rounded-xs border ${name === "Bar" ? "border-[#4d7ef2] shadow-sm" : "border-transparent"}`}
                >
                  <Svg box={96} className="size-8">{art}</Svg>
                </button>
              ))}
            </div>
          </section>
        ))}
      </div>
      <div className="mt-3 flex h-[17px] items-center bg-[#f0f0f0] text-[#505050]">
        <span className="flex w-[17px] justify-center"><Line className="size-3" d="M10 3 5 8l5 5" width={2.4} /></span>
        <span className="h-full flex-1 bg-[#cdcdcd]" />
        <span className="flex w-[17px] justify-center"><Line className="size-3" d="M6 3l5 5-5 5" width={2.4} /></span>
      </div>
      {/* Callout around the panel header */}
      <div className="pointer-events-none absolute top-[39px] right-0 -left-2 h-[91px] border-4 border-[#ff5a4b] shadow-[inset_1px_1px_3px_1px_rgba(0,0,0,0.7),1px_1px_3px_1px_rgba(0,0,0,0.7)]" />
    </aside>
  );
}

/* ---------- page ---------- */

export default function App() {
  return (
    <div className="flex h-screen flex-col overflow-hidden border-r border-b border-l border-r-[#b0b0b0] border-b-[#a8a8a8] border-l-[#2b4850] bg-white font-[Roboto,sans-serif]">
      <BrowserChrome />
      <div className="flex min-h-0 flex-1">
        <div className="flex min-w-0 flex-1 flex-col">
          <AppHeader />
          <div className="flex min-h-0 flex-1">
            <SideNav />
            <div className="flex min-w-0 flex-1 flex-col pb-[7px]">
              <main className="flex min-h-0 flex-1 border-b border-l border-[#3a3d42]">
                <Rail />
                <div className="flex min-w-0 flex-1 flex-col">
                  <DesignerTabs />
                  <div className="flex min-h-0 flex-1">
                    <FieldsPanel />
                    <div className="flex min-w-0 flex-1 flex-col bg-[#f0f0f2]">
                      <Toolbar />
                      <div className="relative flex h-[29px] shrink-0 items-center bg-white pl-[25px] shadow-[0_2px_6px_rgba(0,0,0,0.08)]">
                        <CheckOption label="Detail Rows" className="w-28" />
                        <CheckOption label="Group Totals" className="w-[118px]" />
                        <CheckOption label="Report Totals" className="" />
                      </div>
                      <FundChart />
                      <ReportTable />
                    </div>
                    <VisualizationsPanel />
                  </div>
                </div>
              </main>
            </div>
          </div>
        </div>
        <div className="flex w-[17px] shrink-0 flex-col items-center bg-[#f0f0f0] text-[#505050]">
          <span className="flex h-[34px] pt-0.5"><Line className="size-3" d="M3 10l5-5 5 5" width={2.4} /></span>
          <span className="w-full flex-1 bg-[#cdcdcd]" />
          <span className="flex h-[17px] items-center"><Line className="size-3" d="M3 6l5 5 5-5" width={2.4} /></span>
        </div>
      </div>
      <div className="flex h-[17px] shrink-0 items-center bg-[#f0f0f0] pr-[17px] text-[#505050]">
        <span className="flex w-[17px] justify-center"><Line className="size-3" d="M10 3 5 8l5 5" width={2.4} /></span>
        <span className="h-full flex-1 bg-[#cdcdcd]" />
        <span className="flex w-[17px] justify-center"><Line className="size-3" d="M6 3l5 5-5 5" width={2.4} /></span>
      </div>
    </div>
  );
}
